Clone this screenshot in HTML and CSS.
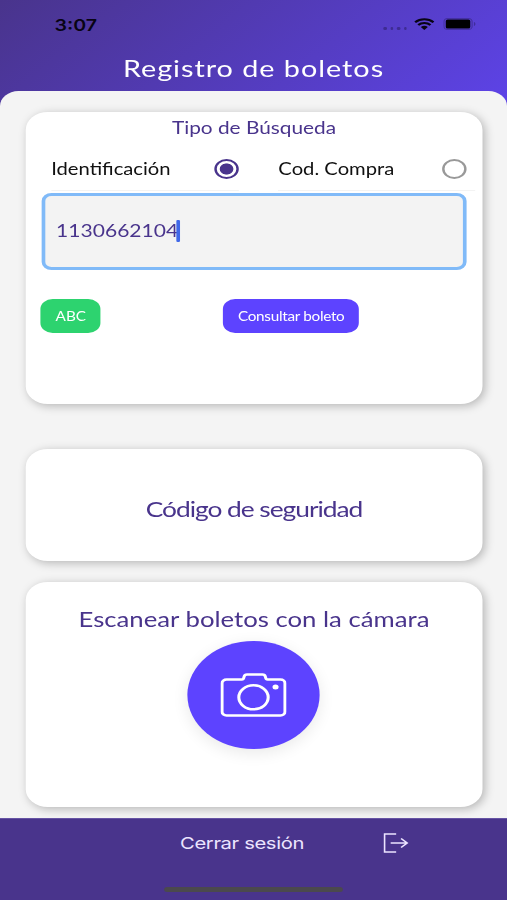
FILE: index.html
```html
<!DOCTYPE html>
<html lang="es">
<head>
<meta charset="utf-8">
<title>Registro de boletos</title>
<link rel="stylesheet" href="styles.css">
</head>
<body>
<div class="screen">
  <header class="header">
    <div class="status">
      <span class="time">3:07</span>
      <div class="indicators">
        <span class="dots"><i></i><i></i><i></i><i></i></span>
        <svg class="wifi" viewBox="0 0 17 12"><path d="M1 4.2a11 11 0 0 1 15 0M3.5 7a7.3 7.3 0 0 1 10 0" fill="none" stroke="#080414" stroke-width="2"/><path d="M5.6 9.1a4.3 4.3 0 0 1 5.8 0L8.500 12z" fill="#080414"/></svg>
        <svg class="battery" viewBox="0 0 27 12"><rect x=".5" y=".5" width="23" height="11" rx="3" fill="none" stroke="#080414" stroke-opacity=".25"/><rect x="2" y="1.500" width="20" height="9" rx="1.5" fill="#000"/><path d="M25 4v4c1.600-.5 1.600-3.500 0-4z" fill="#080414" opacity=".3"/></svg>
      </div>
    </div>
    <h1 class="title">Registro de boletos</h1>
  </header>
  <main class="sheet">
    <section class="card search">
      <h2 class="search-title">Tipo de Búsqueda</h2>
      <div class="options">
        <label class="option"><span>Identificación</span><span class="radio checked"></span></label>
        <label class="option"><span>Cod. Compra</span><span class="radio"></span></label>
      </div>
      <div class="field"><span class="value">1130662104</span><span class="caret"></span></div>
      <div class="actions">
        <button class="btn green">ABC</button>
        <button class="btn violet">Consultar boleto</button>
      </div>
    </section>
    <section class="card code"><h2 class="code-title">Código de seguridad</h2></section>
    <section class="card scan">
      <h2 class="scan-title">Escanear boletos con la cámara</h2>
      <button class="camera" aria-label="Cámara">
        <svg viewBox="0 0 54 44" fill="none" stroke="#fff" stroke-width="2.500" stroke-linejoin="round"><path d="M5 6.500h12.500c1.500 0 1.500-1.400 1.800-2.800.3-1.500 1-2.200 2.400-2.200h12.600c1.400 0 2.100.7 2.400 2.200.3 1.400.3 2.800 1.800 2.800H49a3.700 3.700 0 0 1 3.700 3.700v28.600a3.700 3.700 0 0 1-3.700 3.700H5a3.700 3.700 0 0 1-3.700-3.700V10.200A3.700 3.700 0 0 1 5 6.500z"/><circle cx="27" cy="24.300" r="12"/><circle cx="45" cy="14" r="2.500" fill="#fff" stroke="none"/></svg>
      </button>
    </section>
  </main>
  <footer class="footer">
    <div class="logout">
      <span>Cerrar sesión</span>
      <svg viewBox="0 0 21 20" fill="none" stroke="#ece4ff" stroke-width="1.400"><path d="M10.500 1H1v18h9.500M6 10h13.500M14.500 5.500 19.500 10l-5 4.500"/></svg>
    </div>
    <div class="home"></div>
  </footer>
</div>
</body>
</html>
```
FILE: styles.css
```css
* { box-sizing: border-box; }
body { margin: 0; width: 507px; height: 900px; overflow: hidden; }
h1, h2 { margin: 0; font-weight: 400; white-space: nowrap; }
button { border: 0; padding: 0; font-family: inherit; }
/* 414pt wide layout widened to the window */
.screen {
  width: 414px; height: 900px;
  display: flex; flex-direction: column;
  transform: scaleX(1.22464); transform-origin: 0 0;
  font-family: Lato, sans-serif; color: #49348c;
  background: linear-gradient(135deg, #49348c 0, #5d43e8 100%) 0 0 / 100% 110px no-repeat;
}
.header { height: 91px; flex: none; }
.status { height: 48px; display: flex; justify-content: space-between; padding: 0 25px 0 44.500px; }
.time { font: 600 16px/50px Inter, sans-serif; color: #080414; }
.indicators { display: flex; align-items: center; }
.dots { display: flex; gap: 3px; margin: 9px 6px 0 0; }
.dots i { width: 2.500px; height: 2.500px; border-radius: 50%; background: #080414; opacity: .3; }
.wifi { width: 17px; height: 12px; margin-right: 7px; }
.battery { width: 27px; height: 12px; }
.title { text-align: center; color: #fff; font-size: 23.500px; line-height: 40px; letter-spacing: .8px; }
.sheet {
  height: 727px; flex: none; overflow: hidden;
  background: #f4f4f4; border-radius: 15px 15px 0 0;
  padding: 20.500px 20.500px 0 21.300px;
}
.card { background: #fff; border-radius: 18px; box-shadow: 2px 2px 9px rgba(0,0,0,.26); }
.search { height: 292.500px; padding: 0 12px; }
.search-title { font-size: 17px; line-height: 32px; text-align: center; }
.options { height: 47px; display: flex; margin: 0 -6px 0 8.500px; }
.option { flex: 1; display: flex; justify-content: space-between; align-items: center; border-bottom: 1px solid #f3f3f3; padding: 4.500px 7px 0 0; color: #111; font-size: 16.500px; }
.option:first-child { padding-right: 0; flex: 0 0 153px; }
.option:last-child { margin-left: 32.500px; }
.radio { width: 20px; height: 20px; border: 2px solid #999; border-radius: 50%; }
.radio.checked { border-color: #49348c; background: radial-gradient(circle, #49348c 5.200px, #fff 5.900px); }
.field {
  height: 77px; margin: 2px .5px 0; border: 3px solid #80baf8; border-radius: 8px;
  background: #f3f3f3; display: flex; align-items: center; padding: 0 0 1px 9px; font-size: 17.200px;
}
.caret { width: 3px; height: 22px; background: #4068e8; border-radius: 1px; margin-left: -1.500px; }
.actions { display: flex; margin-top: 29.500px; gap: 100px; }
.btn { height: 34px; color: #fff; font-size: 12.500px; border-radius: 10px; }
.green { width: 49px; background: #2dd36f; }
.violet { width: 111px; background: #5d43ff; letter-spacing: -.25px; }
.code { height: 112px; margin-top: 45px; text-align: center; }
.code-title { font-size: 21.500px; line-height: 120px; letter-spacing: -.84px; }
.scan { height: 225px; margin-top: 21px; display: flex; flex-direction: column; align-items: center; }
.scan-title { font-size: 21px; line-height: 28px; margin-top: 22.500px; }
.camera {
  width: 108px; height: 108px; margin-top: 8.500px; border-radius: 50%;
  background: #5d43ff; box-shadow: 0 4px 14px rgba(0,0,0,.09);
  display: grid; place-items: center;
}
.camera svg { width: 54px; height: 44px; }
.footer { flex: 1; background: #49348c; display: flex; flex-direction: column; align-items: center; border-top: 1px solid #6654a4; }
.logout { align-self: stretch; height: 48px; padding-left: 147px; display: flex; align-items: center; color: #ece4ff; font: 16.500px Inter, sans-serif; letter-spacing: -.3px; }
.logout span { width: 166px; }
.logout svg { width: 21px; height: 20px; }
.home { width: 146px; height: 5px; border-radius: 3px; background: #4b494d; margin-top: 20px; }
```
